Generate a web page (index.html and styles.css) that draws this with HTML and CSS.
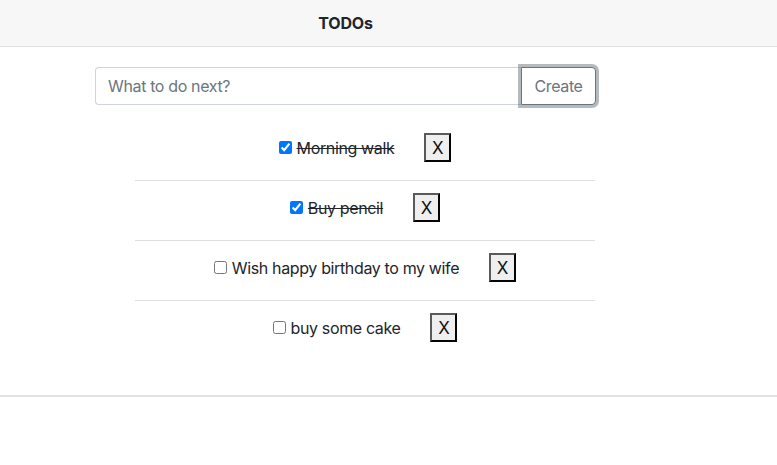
FILE: index.html
```html
<!DOCTYPE html>
<html>
<head>
<meta charset="utf-8">
<link rel="stylesheet" href="styles.css">
</head>
<body>
<header class="topbar"><h1 class="title">TODOs</h1></header>
<main class="main">
  <form class="input-group">
    <input class="todo-input" type="text" placeholder="What to do next?">
    <button class="create-btn" type="button">Create</button>
  </form>
  <ul class="todo-list">
    <li class="todo"><label class="todo-label done"><input type="checkbox" class="check" checked>Morning walk</label><button class="del">X</button></li>
    <li class="todo"><label class="todo-label done"><input type="checkbox" class="check" checked>Buy pencil</label><button class="del">X</button></li>
    <li class="todo"><label class="todo-label"><input type="checkbox" class="check">Wish happy birthday to my wife</label><button class="del">X</button></li>
    <li class="todo"><label class="todo-label"><input type="checkbox" class="check">buy some cake</label><button class="del">X</button></li>
  </ul>
</main>
<div class="footer-line"></div>
</body>
</html>
```
FILE: styles.css
```css
* { box-sizing: border-box; }
html, body { margin: 0; padding: 0; background: #fff; }
body {
  font-family: Inter, "Liberation Sans", Arial, sans-serif;
  font-size: 16px;
  letter-spacing: -0.36px;
  color: #212529;
}
.topbar {
  height: 47px;
  background: #f7f7f7;
  border-bottom: 1px solid #dfdfdf;
  display: flex;
  align-items: center;
  justify-content: center;
  padding-right: 86px;
}
.title {
  margin: 0;
  font-size: 16px;
  font-weight: 700;
  letter-spacing: -0.2px;
  color: #212529;
}
.main {
  width: 501px;
  margin: 20px 0 0 95px;
}
.input-group {
  display: flex;
  height: 38px;
  margin: 0;
}
.todo-input {
  flex: 1;
  height: 38px;
  border: 1px solid #ced4da;
  border-right: none;
  border-radius: 4px 0 0 4px;
  padding: 6px 12px;
  font-family: inherit;
  font-size: 16px;
  letter-spacing: -0.36px;
  color: #495057;
  outline: none;
}
.todo-input::placeholder { color: #6c757d; }
.create-btn {
  width: 75px;
  height: 38px;
  border: 1px solid #6c757d;
  border-radius: 0 4px 4px 0;
  background: #fff;
  color: #6c757d;
  font-family: inherit;
  font-size: 16px;
  letter-spacing: -0.36px;
  box-shadow: 0 0 0 3px rgba(108,117,125,.5);
  padding: 0;
}
.todo-list {
  list-style: none;
  margin: 16px 0 0 40px;
  padding: 0;
  width: 460px;
}
.todo {
  height: 60px;
  display: flex;
  align-items: flex-start;
  justify-content: center;
  padding-top: 12px;
  border-bottom: 1px solid #dfdfdf;
}
.todo:last-child { border-bottom: none; }
.todo-label {
  display: flex;
  align-items: center;
  height: 29px;
  color: #212529;
}
.done { text-decoration: line-through; }
.check {
  width: 13px;
  height: 13px;
  margin: 0 5px 0 0;
  accent-color: #0075ff;
}
.del {
  margin-left: 30px;
  width: 27px;
  height: 29px;
  padding: 0;
  border: 2px outset #5a5a5a;
  background: #efefef;
  font-family: inherit;
  font-size: 17px;
  color: #111;
}
.footer-line {
  margin-top: 34px;
  border-top: 2px solid #e2e2e2;
}
```
